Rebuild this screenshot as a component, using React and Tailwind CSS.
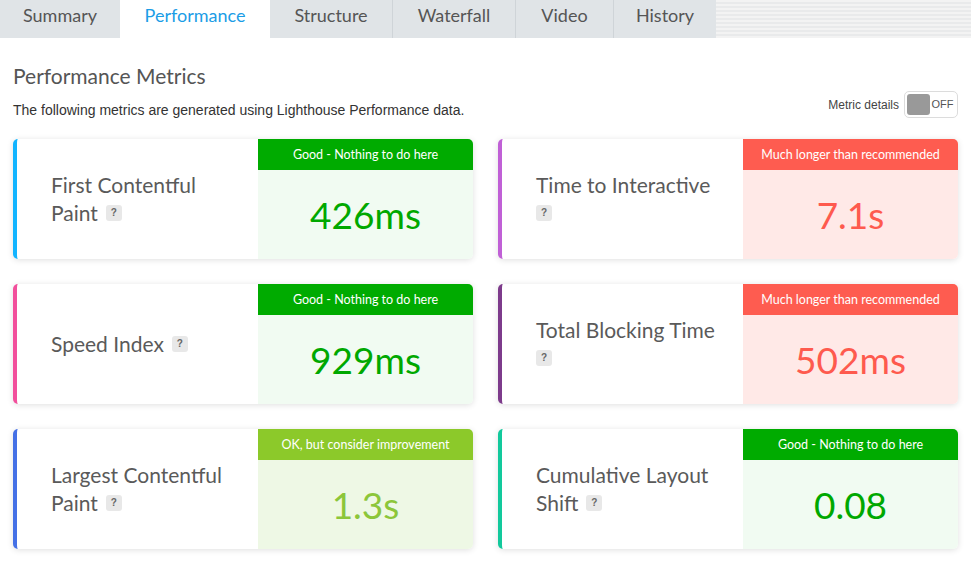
import React from "react";

const TABS = [
  { name: "Summary",     w: "w-[120px]" },
  { name: "Performance", w: "w-[150px]", active: true },
  { name: "Structure",   w: "w-[122px]" },
  { name: "Waterfall",   w: "w-[123px]", line: true },
  { name: "Video",       w: "w-[98px]",  line: true },
  { name: "History",     w: "w-[103px]", line: true },
];

const GOOD = { text: "Good - Nothing to do here", head: "bg-[#00ab00]", body: "bg-[#f1fbf2]", val: "text-[#00a800]" };
const OK   = { text: "OK, but consider improvement", head: "bg-[#8cc92a]", body: "bg-[#eef8e5]", val: "text-[#8cc63a]" };
const BAD  = { text: "Much longer than recommended", head: "bg-[#fe5c50]", body: "bg-[#ffe9e7]", val: "text-[#fe5a4e]" };

const METRICS = [
  { lines: ["First Contentful", "Paint"],      value: "426ms", edge: "border-l-[#12b4ff]", grade: GOOD },
  { lines: ["Time to Interactive", ""],        value: "7.1s",  edge: "border-l-[#c060d6]", grade: BAD },
  { lines: ["Speed Index"],                    value: "929ms", edge: "border-l-[#f24f9c]", grade: GOOD },
  { lines: ["Total Blocking Time", ""],        value: "502ms", edge: "border-l-[#7d3b8b]", grade: BAD },
  { lines: ["Largest Contentful", "Paint"],    value: "1.3s",  edge: "border-l-[#4470e6]", grade: OK },
  { lines: ["Cumulative Layout", "Shift"],     value: "0.08",  edge: "border-l-[#12c99c]", grade: GOOD },
];

const round = { fontFamily: "Lato, 'Noto Sans', sans-serif" };
const helv = { fontFamily: "'Liberation Sans', Arial, sans-serif" };

const Help = () => (
  <span className="inline-flex items-center justify-center w-[16px] h-[16px] rounded-[3px] bg-[#e8e8e8] text-[10px] font-bold text-[#666] align-middle" style={helv}>
    ?
  </span>
);

const MetricCard = ({ m }) => (
  <div className={`flex h-[120px] rounded-[5px] overflow-hidden bg-white border-l-4 ${m.edge} shadow-[0_1px_6px_rgba(0,0,0,0.13)]`}>
    <div className="w-[241px] flex flex-col justify-center pl-[34px] pr-[16px] text-[21px] leading-[28px] text-[#5a5a5a]" style={round}>
      {m.lines.map((line, i) => (
        <div key={i} className="h-[28px] flex items-center gap-[8px] whitespace-nowrap">
          {line && <span>{line}</span>}
          {i === m.lines.length - 1 && <Help />}
        </div>
      ))}
    </div>
    <div className={`flex-1 flex flex-col ${m.grade.body}`}>
      <div className={`h-[31px] flex items-center justify-center pt-[2px] text-[12.5px] text-white ${m.grade.head}`} style={round}>
        {m.grade.text}
      </div>
      <div className={`flex-1 flex items-center justify-center text-[37px] ${m.grade.val}`} style={round}>
        {m.value}
      </div>
    </div>
  </div>
);

export default function App() {
  return (
    <div className="w-[971px] h-[564px] bg-white overflow-hidden">
      {/* ── Tabs ── */}
      <div className="flex h-[38px] bg-[#e0e4e7]">
        {TABS.map((t) => (
          <div key={t.name}
            className={`${t.w} flex items-center justify-center pb-[8px] text-[18px] ${t.active ? "bg-white text-[#1b9de6]" : "text-[#555]"} ${t.line ? "border-l border-[#cfd4d8]" : ""}`}
            style={round}>
            {t.name}
          </div>
        ))}
        <div className="flex-1 bg-[#eeeff0] bg-[repeating-linear-gradient(0deg,#f3f3f3_0px,#f3f3f3_2px,#e9eaeb_2px,#e9eaeb_4px)]" />
      </div>

      {/* ── Content ── */}
      <div className="px-[13px]">
        <h2 className="pt-[26px] text-[21px] leading-[24px] text-[#555]" style={round}>Performance Metrics</h2>

        <div className="mt-[3px] flex justify-between h-[27px]">
          <p className="self-end text-[14px] leading-[16px] text-[#333]" style={helv}>
            The following metrics are generated using Lighthouse Performance data.
          </p>
          <div className="flex items-center gap-[5px]">
            <span className="text-[12px] text-[#444]" style={helv}>Metric details</span>
            <div className="flex items-center w-[54px] h-[27px] p-[2px] border border-[#dcdcdc] rounded-[5px]">
              <div className="w-[23px] h-[21px] rounded-[3px] bg-[#999]" />
              <span className="flex-1 text-center text-[11px] text-[#555]" style={helv}>OFF</span>
            </div>
          </div>
        </div>

        <div className="mt-[21px] w-[945px] grid grid-cols-2 gap-[25px]">
          {METRICS.map((m) => <MetricCard key={m.value + m.lines[0]} m={m} />)}
        </div>
      </div>
    </div>
  );
}
